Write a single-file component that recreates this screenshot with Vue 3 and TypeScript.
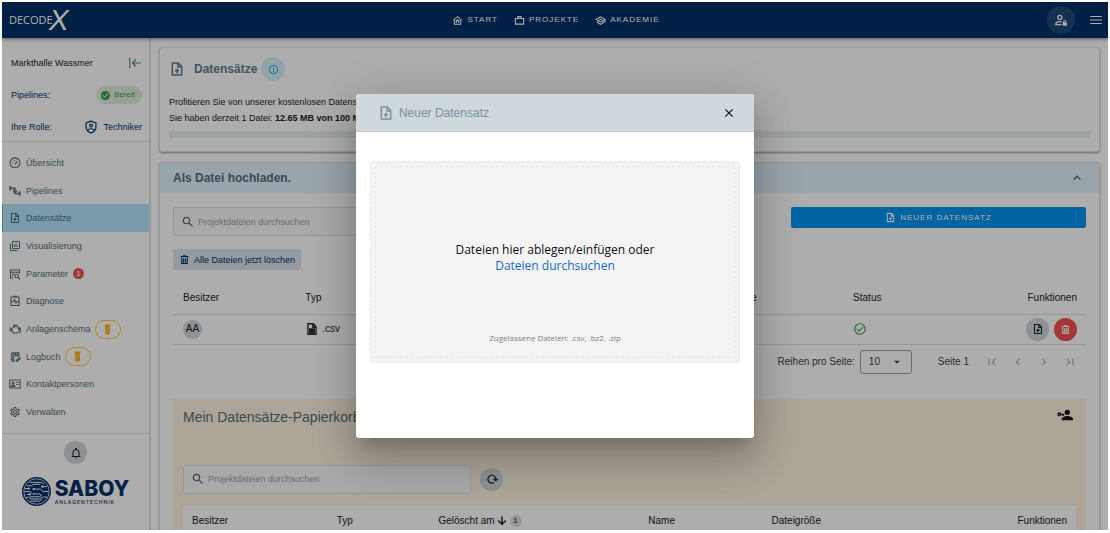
<script setup lang="ts">
import { h, ref } from 'vue'

interface Glyph { f?: string; s?: string; w?: number }

const glyphs: Record<string, Glyph> = {
  home: { f: 'M12 2L1 12h3v9h16v-9h3L12 2m0 2.700l6 5.500V19H6v-8.800L12 4.700M8 17v-5l4-3 4 3v5h-3v-4h-2v4H8z' },
  briefcase: { s: 'M3 7.500h18v12.500H3zM8.500 7V3.500h7V7', w: 2.4 },
  school: { s: 'M12 4L2.500 9.500 12 15l9.500-5.500L12 4zM6 12v5l6 3.300 6-3.300v-5M21.500 9.500V17M9 9.500h6', w: 2.4 },
  accountLock: { f: 'M10 3a4.500 4.500 0 1 0 0 9 4.500 4.500 0 0 0 0-9m0 2.200a2.300 2.300 0 1 1 0 4.600 2.300 2.300 0 0 1 0-4.600M10 13.500c-4 0-8 2-8 4.800V21h11v-2.200H4.200c0-1.300 3-3 5.800-3 1 0 2 .2 3 .5v-2.400c-1-.2-2-.4-3-.4M15 16h1v-1.500a2.500 2.500 0 0 1 5 0V16h1v6h-7v-6m2.400 0h2.200v-1.500a1.100 1.100 0 0 0-2.200 0V16z' },
  menu: { f: 'M2 5H22V7H2V5M2 11H22V13H2V11M2 17H22V19H2V17Z' },
  collapse: { s: 'M3 3v18M22 12H8M13.500 6l-6 6 6 6' },
  checkCircle: { f: 'M12 2C6.500 2 2 6.500 2 12S6.500 22 12 22 22 17.500 22 12 17.500 2 12 2M10 17L5 12L6.410 10.590L10 14.170L17.590 6.580L19 8L10 17Z' },
  checkOutline: { s: 'M12 3a9 9 0 1 0 0 18 9 9 0 0 0 0-18M7 12l3.500 3.500L17.500 8.500' },
  shield: { s: 'M12 2L3.500 5v6.500c0 5 3.600 9 8.500 10.500 4.900-1.500 8.500-5.500 8.500-10.500V5L12 2zM12 7a2.500 2.500 0 1 0 0 5 2.500 2.500 0 0 0 0-5M7 17.500c1-3.300 9-3.300 10 0' },
  gauge: { s: 'M7 20.500a10 10 0 1 1 10 0zM12 15l4-7M6.500 13h1.500M8 8l1 1M12 6v1.500M16.500 13h1.500', w: 2.3 },
  pipe: { s: 'M2.500 2v9M3 6.500h8.500v10.500H21M21.500 12.500v9M8 12h3M12 12h4', w: 3.4 },
  fileUp: { s: 'M14 3H5v18h14V8l-5-5zM13.500 3v6H19M12 18.500v-5M9.300 15.500l2.700-2.700 2.700 2.700', w: 2.2 },
  chartBox: { s: 'M7 3h14v14H7zM3 7v14h14M10.500 14V9.500M14 14V6M17.500 14v-3' },
  tableSearch: { s: 'M8 20H3V4h18v7M3 8.500h18M6 12.500h5M6 16h3M15.500 12.500a3.500 3.500 0 1 0 0 7 3.500 3.500 0 0 0 0-7M18 18.500l4 4', w: 2.2 },
  clipboard: { s: 'M4 4h16v17H4zM9 4V2.500h6V4M5 13h4l2-4 3 7 2-3h4', w: 2.2 },
  engine: { s: 'M7 9h3V6.500h7L19 10v3h2v-3h1.500v8H19l-3 2H9l-3-3v-4H2.500M2.500 9v8M8 4.500h8M12 4v2.500M6 13V9.500', w: 2.4 },
  logbook: { s: 'M12 20.500H6V3.500h14V11M9.500 4v16M3.500 7h4M3.500 12h4M3.500 17h4M13 4v6l2-1.500L17 10V4M15 20.500l.4-2.500 5-5 2 2-5 5z', w: 2.2 },
  card: { s: 'M1.500 4h21v16h-21zM14.500 9h5M14.500 13h5M4.500 17c0-3 7.500-3 7.500 0zM8.300 8a2 2 0 1 0 0 4 2 2 0 0 0 0-4', w: 2.2 },
  cog: { f: 'M12,8A4,4 0 0,1 16,12A4,4 0 0,1 12,16A4,4 0 0,1 8,12A4,4 0 0,1 12,8M12,10A2,2 0 0,0 10,12A2,2 0 0,0 12,14A2,2 0 0,0 14,12A2,2 0 0,0 12,10M10,22C9.750,22 9.540,21.820 9.500,21.580L9.130,18.930C8.500,18.680 7.960,18.340 7.440,17.940L4.950,18.950C4.730,19.030 4.460,18.950 4.340,18.730L2.340,15.270C2.210,15.050 2.270,14.780 2.460,14.630L4.570,12.970L4.500,12L4.570,11L2.460,9.370C2.270,9.220 2.210,8.950 2.340,8.730L4.340,5.270C4.460,5.050 4.730,4.960 4.950,5.050L7.440,6.050C7.960,5.660 8.500,5.320 9.130,5.070L9.500,2.420C9.540,2.180 9.750,2 10,2H14C14.250,2 14.460,2.180 14.500,2.420L14.870,5.070C15.500,5.320 16.040,5.660 16.560,6.050L19.050,5.050C19.270,4.960 19.540,5.050 19.660,5.270L21.660,8.730C21.790,8.950 21.730,9.220 21.540,9.370L19.430,11L19.500,12L19.430,13L21.540,14.630C21.730,14.780 21.790,15.050 21.660,15.270L19.660,18.730C19.540,18.950 19.270,19.040 19.050,18.950L16.560,17.950C16.040,18.340 15.500,18.680 14.870,18.930L14.500,21.580C14.460,21.820 14.250,22 14,22H10M11.250,4L10.880,6.610C9.680,6.860 8.620,7.500 7.850,8.390L5.440,7.350L4.690,8.650L6.800,10.200C6.400,11.370 6.400,12.640 6.800,13.800L4.680,15.360L5.430,16.660L7.860,15.620C8.630,16.500 9.680,17.140 10.870,17.380L11.240,20H12.760L13.130,17.390C14.320,17.140 15.370,16.500 16.140,15.620L18.570,16.660L19.320,15.360L17.200,13.810C17.600,12.640 17.600,11.370 17.200,10.200L19.310,8.650L18.560,7.350L16.150,8.390C15.380,7.500 14.320,6.860 13.120,6.620L12.750,4H11.250Z' },
  tube: { f: 'M6 1h12v4h-1v15a3 3 0 0 1-3 3h-4a3 3 0 0 1-3-3V5H6V1m8 7a1.300 1.300 0 1 0 0 2.600A1.300 1.300 0 0 0 14 8m-3.500 4a1.300 1.300 0 1 0 0 2.600 1.300 1.300 0 0 0 0-2.600z' },
  bell: { f: 'M10 21H14C14 22.100 13.100 23 12 23S10 22.100 10 21M21 19V20H3V19L5 17V11C5 7.900 7.030 5.170 10 4.290V4C10 2.900 10.900 2 12 2S14 2.900 14 4V4.290C16.970 5.170 19 7.900 19 11V17L21 19M17 11C17 8.240 14.760 6 12 6S7 8.240 7 11V18H17V11Z' },
  info: { f: 'M11,9H13V7H11M12,20C7.590,20 4,16.410 4,12C4,7.590 7.590,4 12,4C16.410,4 20,7.590 20,12C20,16.410 16.410,20 12,20M12,2A10,10 0 0,0 2,12A10,10 0 0,0 12,22A10,10 0 0,0 22,12A10,10 0 0,0 12,2M11,17H13V11H11V17Z' },
  search: { f: 'M9.500,3A6.500,6.500 0 0,1 16,9.500C16,11.110 15.410,12.590 14.440,13.730L14.710,14H15.500L20.500,19L19,20.500L14,15.500V14.710L13.730,14.440C12.590,15.410 11.110,16 9.500,16A6.500,6.500 0 0,1 3,9.500A6.500,6.500 0 0,1 9.500,3M9.500,5C7,5 5,7 5,9.500C5,12 7,14 9.500,14C12,14 14,12 14,9.500C14,7 12,5 9.500,5Z' },
  trash: { s: 'M6 7v13.500h12V7M3.500 5.500h17M8.500 4h7M10 9v9M14 9v9', w: 2.4 },
  fileTable: { s: 'M14 3H5v18h14V8l-5-5zM13.500 3v6H19M8 12h8v6H8zM8 15h8M12 12v6', w: 2.2 },
  up: { f: 'M7.410,15.410L12,10.830L16.590,15.410L18,14L12,8L6,14L7.410,15.410Z' },
  first: { f: 'M18.410,16.590L13.820,12L18.410,7.410L17,6L11,12L17,18L18.410,16.590M6,6H8V18H6V6Z' },
  left: { f: 'M15.410,16.580L10.830,12L15.410,7.410L14,6L8,12L14,18L15.410,16.580Z' },
  right: { f: 'M8.590,16.580L13.170,12L8.590,7.410L10,6L16,12L10,18L8.590,16.580Z' },
  last: { f: 'M5.590,7.410L10.180,12L5.590,16.590L7,18L13,12L7,6L5.590,7.410M16,6H18V18H16V6Z' },
  caret: { f: 'M7,10L12,15L17,10H7Z' },
  personKey: { f: 'M15.500 4a4 4 0 1 0 0 8 4 4 0 0 0 0-8m0 9.500c-3 0-8.500 1.500-8.500 4.300V20h17v-2.200c0-2.800-5.500-4.300-8.500-4.300M3.500 8a3 3 0 1 0 2.800 4H8v1.500h2V12h1v-2H6.300a3 3 0 0 0-2.800-2m0 2a1 1 0 1 1 0 2 1 1 0 0 1 0-2z' },
  refresh: { s: 'M16 18.800A7.800 7.800 0 1 1 19.500 13M16.500 12.500h6l-3 3z', w: 2.4 },
  down: { f: 'M10.500,3H13.500V15L18.500,10L20.500,12L12,20.500L3.500,12L5.500,10L10.500,15V3Z' },
  close: { f: 'M19,6.410L17.590,5L12,10.590L6.410,5L5,6.410L10.590,12L5,17.590L6.410,19L12,13.410L17.590,19L19,17.590L13.410,12L19,6.410Z' },
}

const Icon = (p: { name: string }) => {
  const g = glyphs[p.name]
  return h('svg', { viewBox: '0 0 24 24', 'aria-hidden': 'true' }, [
    g.f
      ? h('path', { d: g.f, fill: 'currentColor', 'fill-rule': 'evenodd' })
      : h('path', { d: g.s, fill: 'none', stroke: 'currentColor', 'stroke-width': g.w ?? 2 }),
  ])
}
Icon.props = ['name']

const topNav = [
  { icon: 'home', label: 'START' },
  { icon: 'briefcase', label: 'PROJEKTE' },
  { icon: 'school', label: 'AKADEMIE' },
]

const sideNav = [
  { icon: 'gauge', label: 'Übersicht' },
  { icon: 'pipe', label: 'Pipelines' },
  { icon: 'fileUp', label: 'Datensätze', active: true },
  { icon: 'chartBox', label: 'Visualisierung' },
  { icon: 'tableSearch', label: 'Parameter', count: 1 },
  { icon: 'clipboard', label: 'Diagnose' },
  { icon: 'engine', label: 'Anlagenschema', beta: true },
  { icon: 'logbook', label: 'Logbuch', beta: true },
  { icon: 'card', label: 'Kontaktpersonen' },
  { icon: 'cog', label: 'Verwalten' },
]

const pager = [
  { icon: 'first', label: 'Erste Seite' },
  { icon: 'left', label: 'Vorherige Seite' },
  { icon: 'right', label: 'Nächste Seite' },
  { icon: 'last', label: 'Letzte Seite' },
]

const fileQuery = ref('')
const trashQuery = ref('')
const pageSize = ref('10')
const dialogOpen = ref(true)
</script>

<template>
  <div class="frame">
    <header class="topbar">
      <a href="#" class="brand">DECODE<span class="brand-x">X</span></a>
      <nav class="topnav">
        <a v-for="n in topNav" :key="n.label" href="#"><Icon :name="n.icon" class="i11" />{{ n.label }}</a>
      </nav>
      <div class="topactions">
        <button class="user" aria-label="Konto"><Icon name="accountLock" class="i14" /></button>
        <button class="plain" aria-label="Menü"><Icon name="menu" class="i14" /></button>
      </div>
    </header>

    <div class="body">
      <aside class="sidebar">
        <section class="project">
          <div class="prow"><span class="pname">Markthalle Wassmer</span>
            <button class="plain slate" aria-label="Einklappen"><Icon name="collapse" class="i14" /></button></div>
          <div class="prow"><span>Pipelines:</span>
            <span class="ready"><Icon name="checkCircle" class="i11" />Bereit</span></div>
          <div class="prow"><span>Ihre Rolle:</span>
            <span class="role"><Icon name="shield" class="i14" />Techniker</span></div>
        </section>
        <nav class="sidenav">
          <a v-for="n in sideNav" :key="n.label" href="#" :class="{ active: n.active }">
            <Icon :name="n.icon" class="i12" />{{ n.label }}
            <span v-if="n.count" class="count">{{ n.count }}</span>
            <span v-if="n.beta" class="beta"><Icon name="tube" class="i11" /></span>
          </a>
        </nav>
        <section class="sidefoot">
          <button class="round" aria-label="Benachrichtigungen"><Icon name="bell" class="i12" /></button>
          <div class="company">
            <svg class="emblem" viewBox="0 0 30 30" aria-hidden="true">
              <circle cx="15" cy="15" r="15" fill="#003066" />
              <circle cx="15" cy="15" r="13.200" fill="none" stroke="#fff" stroke-width=".8" />
              <g fill="none" stroke="#fff" stroke-width="1">
                <path d="M8 5.500h12l3 2M5 9h5l2-1.500h7M3 12h4M2.500 15h5.500l3 2.500h7l2 1.500-2 1.500H8M12 12.500h7l3 2.500h5.500M5 18h3M4 21h3l2 1.800h9l3-2h5M8 25h10l3-2M21 10h5" />
              </g>
              <g fill="#fff"><circle cx="8" cy="18" r="1.200" /><circle cx="12" cy="12.500" r="1.200" /><circle cx="7" cy="12" r="1.200" /><circle cx="21" cy="10" r="1.200" /></g>
            </svg>
            <div class="cname"><strong>SABOY</strong><small>ANLAGENTECHNIK</small></div>
          </div>
        </section>
      </aside>

      <main class="main">
        <section class="card intro">
          <h1><Icon name="fileUp" class="i16" />Datensätze
            <button class="infobtn" aria-label="Information"><Icon name="info" class="i11" /></button></h1>
          <p>Profitieren Sie von unserer kostenlosen Datenspeicherung.</p>
          <p>Sie haben derzeit 1 Datei: <b>12.65 MB von 100 MB</b></p>
          <div class="bar"></div>
        </section>

        <section class="card upload">
          <button class="cardhead"><span>Als Datei hochladen.</span><Icon name="up" class="i16" /></button>
          <div class="content">
            <div class="tools">
              <label class="search"><Icon name="search" class="i14" />
                <input v-model="fileQuery" type="text" placeholder="Projektdateien durchsuchen" aria-label="Projektdateien durchsuchen" /></label>
              <button class="primary"><Icon name="fileUp" class="i11" />NEUER DATENSATZ</button>
            </div>
            <button class="delete"><Icon name="trash" class="i11" />Alle Dateien jetzt löschen</button>
            <table class="files">
              <thead>
                <tr><th class="c1">Besitzer</th><th class="c2">Typ</th><th class="c3">Name</th><th class="c4">Dateigröße</th><th class="c5">Status</th><th class="end">Funktionen</th></tr>
              </thead>
              <tbody>
                <tr>
                  <td><span class="avatar">AA</span></td>
                  <td><span class="type"><Icon name="fileTable" class="i14" />.csv</span></td>
                  <td></td><td></td>
                  <td><Icon name="checkOutline" class="i14 ok" /></td>
                  <td><span class="acts">
                    <button class="round" aria-label="Herunterladen"><Icon name="fileUp" class="i12" /></button>
                    <button class="round danger" aria-label="Löschen"><Icon name="trash" class="i11" /></button>
                  </span></td>
                </tr>
              </tbody>
            </table>
            <div class="paging">
              <label for="rows">Reihen pro Seite:</label>
              <span class="selectbox"><select id="rows" v-model="pageSize"><option>10</option><option>25</option></select><Icon name="caret" class="i14 caret" /></span>
              <span class="page">Seite 1</span>
              <span class="pager"><button v-for="b in pager" :key="b.icon" class="plain" :aria-label="b.label"><Icon :name="b.icon" class="i14" /></button></span>
            </div>
            <section class="bin">
              <div class="binhead"><h2>Mein Datensätze-Papierkorb</h2><Icon name="personKey" class="i16" /></div>
              <div class="bintools">
                <label class="search"><Icon name="search" class="i14" />
                  <input v-model="trashQuery" type="text" placeholder="Projektdateien durchsuchen" aria-label="Papierkorb durchsuchen" /></label>
                <button class="round" aria-label="Aktualisieren"><Icon name="refresh" class="i12" /></button>
              </div>
              <table class="binned">
                <thead>
                  <tr><th class="b1">Besitzer</th><th class="b2">Typ</th>
                    <th class="b3"><span class="sort">Gelöscht am<Icon name="down" class="i12" /><span class="order">1</span></span></th>
                    <th class="b4">Name</th><th class="b5">Dateigröße</th><th class="end">Funktionen</th></tr>
                </thead>
              </table>
            </section>
          </div>
        </section>
      </main>
    </div>

    <div v-if="dialogOpen" class="scrim">
      <div class="dialog" role="dialog" aria-modal="true" aria-labelledby="dlg-title">
        <div class="dlghead">
          <Icon name="fileUp" class="i16" />
          <h2 id="dlg-title">Neuer Datensatz</h2>
          <button class="plain" aria-label="Schließen" @click="dialogOpen = false"><Icon name="close" class="i14" /></button>
        </div>
        <div class="dlgbody">
          <div class="drop">
            <div class="dashed">
              <p>Dateien hier ablegen/einfügen oder <button class="browse">Dateien durchsuchen</button></p>
              <small>Zugelassene Dateien: .csv, .bz2, .zip</small>
            </div>
          </div>
        </div>
      </div>
    </div>
  </div>
</template>

<style>
body { margin: 0; background: #fff; }
</style>

<style scoped>
* { box-sizing: border-box; }
.frame { position: relative; display: flex; flex-direction: column; height: calc(100vh - 5px); margin: 2px 2px 3px; overflow: hidden; background: #fff; color: #212121; font: 9px/16px "Liberation Sans", Arial, sans-serif; }
a { color: inherit; text-decoration: none; }
button { font: inherit; color: inherit; border: 0; padding: 0; background: none; cursor: pointer; }
h1, h2, p { margin: 0; }
svg { display: block; flex: none; }
.i11 { width: 11px; height: 11px; }
.i12 { width: 12px; height: 12px; }
.i14 { width: 14px; height: 14px; }
.i16 { width: 16px; height: 16px; }
.plain { display: grid; place-items: center; }

.topbar { position: relative; z-index: 1; display: grid; grid-template-columns: 1fr auto 1fr; align-items: center; flex: none; height: 36px; padding: 0 5px 0 7px; background: #003066; color: #fff; box-shadow: 0 1px 4px rgba(0, 0, 0, .5); }
.brand { display: flex; align-items: center; font: 400 11px/36px "Open Sans", sans-serif; }
.brand-x { font-family: "Liberation Sans", Arial, sans-serif; font-size: 30px; font-style: italic; font-weight: 400; margin-left: -4px; }
.topnav { display: flex; gap: 16px; font-size: 8px; letter-spacing: 1px; }
.topnav a { display: flex; align-items: center; gap: 4px; }
.topactions { display: flex; justify-content: flex-end; align-items: center; gap: 14px; }
.user { display: grid; place-items: center; width: 28px; height: 28px; border-radius: 50%; background: rgba(255, 255, 255, .12); }

.body { display: flex; flex: 1; min-height: 0; }
.sidebar { display: flex; flex-direction: column; flex: none; width: 149px; border-right: 2px solid #e0e0e0; }
.project { display: flex; flex-direction: column; gap: 12px; padding: 15px 7px 4px 9px; border-bottom: 1px solid #e0e0e0; color: #003066; }
.prow { display: flex; justify-content: space-between; align-items: center; height: 20px; }
.pname { color: #212121; }
.slate { color: #607d8b; }
.ready { display: flex; align-items: center; gap: 3px; height: 18px; padding: 0 7px 0 4px; border-radius: 9px; background: #e0eee0; color: #43a047; font-size: 8px; }
.role { display: flex; align-items: center; gap: 5px; }
.sidenav { display: flex; flex-direction: column; flex: 1; padding: 7px 0; color: #546e7a; }
.sidenav a { display: flex; flex: 1; align-items: center; gap: 5px; padding-left: 7px; }
.sidenav a.active { background: #b3e5fc; box-shadow: inset 1px 0 #78a8bd; }
.count { display: grid; place-items: center; width: 11px; height: 11px; border-radius: 50%; background: #ef5350; color: #fff; font-size: 8px; line-height: 11px; }
.beta { display: grid; place-items: center; width: 26px; height: 19px; margin-left: -1px; border: 1px solid #ffc53d; border-radius: 10px; color: #ffb300; }
.sidefoot { display: flex; flex-direction: column; align-items: center; flex: none; height: 97px; padding-top: 7px; border-top: 1px solid #e0e0e0; }
.round { display: grid; place-items: center; flex: none; width: 23px; height: 23px; border-radius: 50%; background: #cfd8dc; color: #212121; }
.danger { background: #ef5350; color: #fff; }
.company { display: flex; align-items: center; gap: 4px; margin-top: 13px; color: #003066; font-family: Inter, sans-serif; }
.emblem { width: 29px; height: 29px; }
.cname { display: flex; flex-direction: column; }
.cname strong { font-size: 21px; line-height: 20px; font-weight: 800; }
.cname small { font-size: 5px; line-height: 6px; font-weight: 500; letter-spacing: 1px; }

.main { flex: 1; min-width: 0; padding: 9px 8px 0; overflow: hidden; }
.card { border: 1px solid #e0e0e0; border-radius: 3px; background: #fff; box-shadow: 0 1px 2px rgba(0, 0, 0, .4); }
.intro { height: 105px; padding: 9px; }
h1 { display: flex; align-items: center; gap: 9px; height: 24px; margin-bottom: 13px; color: #607d8b; font-size: 12px; }
.infobtn { display: grid; place-items: center; width: 24px; height: 24px; margin-left: -5px; border-radius: 50%; background: #d9f0fb; color: #0ea5e9; }
.bar { height: 7px; margin-top: 5px; background: #e9eff1; }
.upload { margin-top: 10px; }
.cardhead { display: flex; justify-content: space-between; align-items: center; width: 100%; height: 30px; padding: 0 14px 0 13px; background: #e3f2fd; color: #546e7a; font-size: 12px; font-weight: 700; }
.content { padding: 14px 13px 0; }
.tools { display: flex; justify-content: space-between; align-items: flex-start; }
.search { display: flex; align-items: center; gap: 3px; width: 288px; height: 29px; padding: 0 7px; border: 1px solid #e0e0e0; border-radius: 2px; background: #fafafa; color: #616161; }
.search input { flex: 1; min-width: 0; border: 0; padding: 0; outline: 0; background: none; font: inherit; color: #212121; }
.search input::placeholder { color: #9e9e9e; opacity: 1; }
.primary { display: flex; justify-content: center; align-items: center; gap: 4px; width: 295px; height: 21px; border-radius: 2px; background: #0094f0; color: #fff; font-size: 8px; letter-spacing: 1px; }
.delete { display: flex; align-items: center; gap: 4px; height: 21px; margin-top: 13px; padding: 0 6px; border-radius: 2px; background: #dde4ee; color: #003066; }
table { width: 100%; border-collapse: collapse; table-layout: fixed; font-size: 10px; }
th { padding: 0 0 0 10px; font-weight: 400; text-align: left; }
td { padding: 0 0 0 10px; height: 30px; }
.files { margin-top: 13px; }
.files th { height: 31px; }
.files th, .files td { border-bottom: 1px solid #e0e0e0; }
.files .c1 { width: 13.4%; } .files .c2 { width: 20%; } .files .c3 { width: 24%; } .files .c4 { width: 16%; } .files .c5 { width: 14%; }
.files .end, .binned .end { padding-right: 9px; text-align: right; }
.avatar { display: grid; place-items: center; width: 19px; height: 19px; border-radius: 50%; background: #cfd8dc; }
.type { display: flex; align-items: center; gap: 3px; }
.ok { color: #43a047; }
.acts { display: flex; justify-content: flex-end; gap: 5px; padding-right: 9px; }
.paging { display: flex; justify-content: flex-end; align-items: center; height: 35px; padding-right: 9px; font-size: 10px; color: #424242; }
.selectbox { display: flex; align-items: center; width: 52px; height: 24px; margin: 0 26px 0 5px; border: 1px solid #9e9e9e; border-radius: 3px; }
select { flex: 1; width: 100%; height: 22px; padding: 0 8px; border: 0; outline: 0; appearance: none; background: none; font: inherit; color: inherit; }
.caret { margin: 0 7px 0 -21px; pointer-events: none; }
.pager { display: flex; gap: 12px; margin-left: 16px; color: #b0b0b0; }
.bin { margin-top: 19px; padding: 8px 10px 40px; background: #fff3e0; }
.binhead { display: flex; justify-content: space-between; height: 20px; padding-right: 3px; color: #111; }
h2 { font-size: 14px; line-height: 20px; font-weight: 400; color: #546e7a; }
.bintools { display: flex; align-items: center; gap: 9px; margin-top: 38px; }
.binned { margin-top: 12px; background: #fff; }
.binned th { height: 30px; padding-left: 9px; }
.binned .b1 { width: 16.2%; } .binned .b2 { width: 11.4%; } .binned .b3 { width: 23.5%; } .binned .b4 { width: 13.8%; } .binned .b5 { width: 20%; }
.sort { display: flex; align-items: center; gap: 1px; }
.order { display: grid; place-items: center; width: 12px; height: 12px; margin-left: 1px; border-radius: 50%; background: #dedede; font-size: 8px; line-height: 12px; }

.scrim { position: absolute; inset: 0; z-index: 2; display: grid; place-items: center; background: rgba(0, 0, 0, .32); }
.dialog { width: 36%; border-radius: 3px; overflow: hidden; background: #fff; box-shadow: 0 11px 15px -7px rgba(0, 0, 0, .2), 0 24px 38px 3px rgba(0, 0, 0, .14), 0 9px 46px 8px rgba(0, 0, 0, .12); }
.dlghead { display: flex; align-items: center; gap: 5px; height: 38px; padding: 0 18px 0 22px; border-bottom: 1px solid #c3cbcf; background: #cfd8dc; color: #78909c; }
.dlghead h2 { flex: 1; font-size: 12px; color: #78909c; }
.dlghead button { color: #111; }
.dlgbody { padding: 29px 14px 75px; }
.drop { height: 202px; padding: 4px; border: 1px solid #eaeaea; border-radius: 3px; background: #f4f4f4; }
.dashed { display: flex; flex-direction: column; align-items: center; justify-content: flex-end; height: 100%; padding-bottom: 11px; border: 1px dashed #e9e9e9; font-family: "Open Sans", sans-serif; }
.dashed p { width: 220px; margin-bottom: 56px; font-size: 12px; line-height: 16px; text-align: center; color: #111; }
.browse { color: #1269cf; }
.dashed small { font-size: 8px; line-height: 16px; color: #808080; }
</style>
